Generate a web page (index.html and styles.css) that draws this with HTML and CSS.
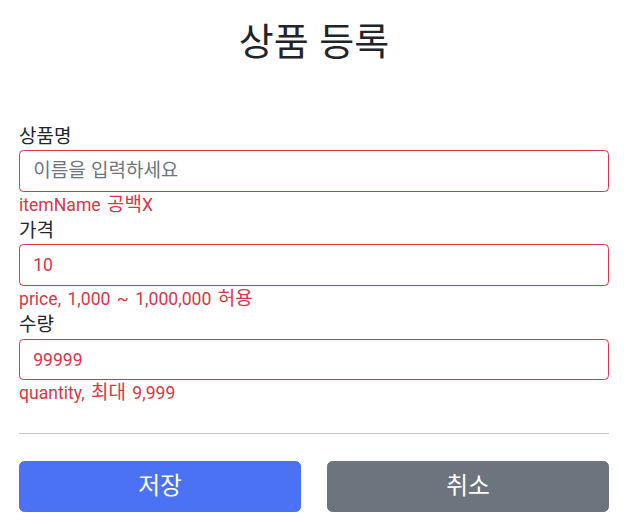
FILE: index.html
```html
<!DOCTYPE html>
<html lang="ko">
<head>
<meta charset="utf-8">
<title>상품 등록</title>
<link rel="stylesheet" href="styles.css">
</head>
<body>
<div class="container">
  <div class="page-header">
    <h2 class="title"><span class="ko">상품 등록</span></h2>
  </div>
  <form class="form">
    <div class="field">
      <label class="label" for="itemName"><span class="ko">상품명</span></label>
      <input type="text" id="itemName" class="control control-ko field-error" placeholder="이름을 입력하세요">
      <div class="error-text">itemName <span class="ko">공백</span>X</div>
    </div>
    <div class="field">
      <label class="label" for="price"><span class="ko">가격</span></label>
      <input type="text" id="price" class="control field-error" value="10">
      <div class="error-text">price, 1,000 ~ 1,000,000 <span class="ko">허용</span></div>
    </div>
    <div class="field">
      <label class="label" for="quantity"><span class="ko">수량</span></label>
      <input type="text" id="quantity" class="control field-error" value="99999">
      <div class="error-text">quantity, <span class="ko">최대</span> 9,999</div>
    </div>
    <hr class="divider">
    <div class="actions">
      <button class="btn btn-primary" type="submit"><span class="ko">저장</span></button>
      <button class="btn btn-secondary" type="button"><span class="ko">취소</span></button>
    </div>
  </form>
</div>
</body>
</html>
```
FILE: styles.css
```css
html, body {
  margin: 0;
  padding: 0;
  background: #fff;
}
body {
  font-family: Roboto, "Noto Sans CJK KR", sans-serif;
  font-size: 17.6px;
  line-height: 1.5;
  color: #212529;
}
.ko {
  font-family: "Noto Sans CJK KR", sans-serif;
  font-size: 108%;
  line-height: 1;
}
.container {
  padding: 0 17px 0 19px;
}
.page-header {
  padding-top: 20px;
  padding-bottom: 52.8px;
  text-align: center;
}
.title {
  height: 42px;
  margin: 0 0 8.8px 0;
  font-size: 35.2px;
  font-weight: 400;
  line-height: 1.2;
}
.form {
  display: flex;
  flex-direction: column;
}
.field {
  display: flex;
  flex-direction: column;
}
.label {
  display: block;
  height: 26.4px;
}
.control {
  display: block;
  box-sizing: border-box;
  width: 100%;
  height: 41.6px;
  margin: 0;
  padding: 6.6px 13.2px;
  font-family: inherit;
  font-size: 17.6px;
  line-height: 1.5;
  color: #212529;
  background: #fff;
  border: 1px solid #ced4da;
  border-radius: 4.4px;
  outline: none;
}
.control-ko::placeholder {
  font-family: "Noto Sans CJK KR", sans-serif;
  font-size: 19px;
}
.control::placeholder {
  color: #6c757d;
  opacity: 1;
}
.field-error {
  border-color: #dc3545;
  color: #dc3545;
}
.error-text {
  height: 26.4px;
  color: #dc3545;
  word-spacing: 2px;
}
.divider {
  margin: 26.4px 0;
  border: 0;
  border-top: 1px solid #c8c9ca;
  height: 0;
}
.actions {
  display: grid;
  grid-template-columns: 1fr 1fr;
  column-gap: 26px;
}
.btn {
  box-sizing: border-box;
  height: 51px;
  padding: 0 17.6px;
  font-family: inherit;
  font-size: 22px;
  line-height: 1.5;
  color: #fff;
  border: 1px solid transparent;
  border-radius: 5.3px;
  cursor: pointer;
}
.btn-primary {
  background: #4b71f4;
  border-color: #4b71f4;
}
.btn-secondary {
  background: #6c757d;
  border-color: #6c757d;
}
```
